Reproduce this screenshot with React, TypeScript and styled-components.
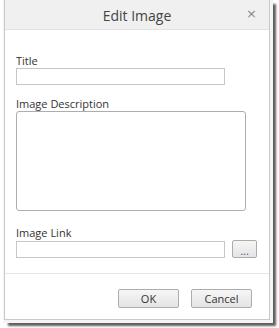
import React from "react";
import styled, { createGlobalStyle } from "styled-components";

const Global = createGlobalStyle`
  html, body { margin: 0; padding: 0; background: #ffffff; }
  body { font-family: "Open Sans", "Noto Sans", "DejaVu Sans", sans-serif; }
`;

const Page = styled.div`
  width: 279px;
  height: 328px;
  padding: 0 0 0 4px;
  box-sizing: border-box;
`;

const Dialog = styled.div`
  width: 266px;
  height: 320px;
  box-sizing: border-box;
  border: 1px solid #c9c9c9;
  border-top: none;
  background: #ffffff;
  box-shadow: 1px 1px 0 2px #f4f4f4, 5px 5px 2px 1px rgba(40, 40, 40, 0.75);
  display: flex;
  flex-direction: column;
`;

const Header = styled.div`
  height: 29px;
  background: #f0f0f0;
  border-bottom: 1px solid #e2e2e2;
  display: flex;
  align-items: center;
  justify-content: center;
  position: relative;
  flex-shrink: 0;
`;

const Title = styled.div`
  font-size: 14px;
  color: #444444;
  margin-top: 1px;
`;

const Close = styled.span`
  position: absolute;
  right: 12px;
  top: 6px;
  font-size: 13px;
  color: #8a8a8a;
  font-family: "DejaVu Sans", sans-serif;
`;

const Body = styled.div`
  flex: 1;
  padding: 24px 11px 0 11px;
  display: flex;
  flex-direction: column;
`;

const Label = styled.div`
  font-size: 11px;
  color: #333333;
  line-height: 13px;
  margin-bottom: 1px;
`;

const Field = styled.div<{ $gap?: number }>`
  margin-bottom: ${(p) => p.$gap ?? 0}px;
`;

const TextInput = styled.div<{ $w: number }>`
  width: ${(p) => p.$w}px;
  height: 17px;
  box-sizing: border-box;
  border: 1px solid #c6c6c6;
  background: #ffffff;
`;

const TextArea = styled.div`
  width: 230px;
  height: 100px;
  box-sizing: border-box;
  border: 1px solid #a9aeb6;
  border-radius: 3px;
  background: #ffffff;
`;

const Row = styled.div`
  display: flex;
  align-items: center;
  gap: 7px;
`;

const Button = styled.button<{ $w: number; $h: number }>`
  width: ${(p) => p.$w}px;
  height: ${(p) => p.$h}px;
  box-sizing: border-box;
  border: 1px solid #acacac;
  border-radius: 2px;
  background: linear-gradient(#f6f6f6, #e4e4e4);
  font-family: "Open Sans", "Noto Sans", sans-serif;
  font-size: 11px;
  color: #333333;
  padding: 0;
  display: flex;
  align-items: center;
  justify-content: center;
`;

const Dots = styled.span`
  color: #4a5a8a;
  font-size: 11px;
  letter-spacing: 0px;
  margin-top: 3px;
`;

const Footer = styled.div`
  height: 46px;
  border-top: 1px solid #e6e6e6;
  display: flex;
  justify-content: flex-end;
  align-items: flex-start;
  padding: 15px 17px 0 0;
  gap: 12px;
  box-sizing: border-box;
  flex-shrink: 0;
`;

export default function App() {
  return (
    <>
      <Global />
      <Page>
        <Dialog>
          <Header>
            <Title>Edit Image</Title>
            <Close>×</Close>
          </Header>
          <Body>
            <Field $gap={12}>
              <Label>Title</Label>
              <TextInput $w={209} />
            </Field>
            <Field $gap={15}>
              <Label>Image Description</Label>
              <TextArea />
            </Field>
            <Field>
              <Label>Image Link</Label>
              <Row>
                <TextInput $w={209} />
                <Button $w={25} $h={18}>
                  <Dots>...</Dots>
                </Button>
              </Row>
            </Field>
          </Body>
          <Footer>
            <Button $w={61} $h={19}>OK</Button>
            <Button $w={61} $h={19}>Cancel</Button>
          </Footer>
        </Dialog>
      </Page>
    </>
  );
}
